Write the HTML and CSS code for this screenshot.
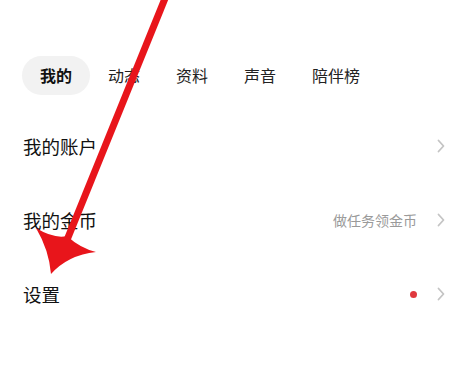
FILE: index.html
```html
<!DOCTYPE html>
<html lang="zh-CN">
  <head>
    <meta charset="UTF-8" />
    <title>我的</title>
    <link rel="stylesheet" href="styles.css">
  </head>
  <body>
    <div class="tabs">
      <span class="tab active">我的</span>
      <span class="tab">动态</span>
      <span class="tab">资料</span>
      <span class="tab">声音</span>
      <span class="tab">陪伴榜</span>
    </div>

    <div class="menu">
      <div class="row">
        <span class="row-title">我的账户</span>
        <span class="row-extra">
          <svg class="chevron" viewBox="0 0 8 14"><polyline points="1.5,1.5 6.5,7 1.5,12.5" /></svg>
        </span>
      </div>
      <div class="row">
        <span class="row-title">我的金币</span>
        <span class="row-extra">
          <span class="hint">做任务领金币</span>
          <svg class="chevron" viewBox="0 0 8 14"><polyline points="1.5,1.5 6.5,7 1.5,12.5" /></svg>
        </span>
      </div>
      <div class="row">
        <span class="row-title">设置</span>
        <span class="row-extra">
          <span class="dot"></span>
          <svg class="chevron" viewBox="0 0 8 14"><polyline points="1.5,1.5 6.5,7 1.5,12.5" /></svg>
        </span>
      </div>
    </div>

    <!-- 标注箭头 -->
    <svg class="arrow" viewBox="0 0 471 368">
      <line x1="166" y1="-4" x2="67" y2="240" />
      <path d="M51,274 Q49,250 36,228 Q54,239 67,236 Q80,248 96,252 Q68,255 51,274 Z" />
    </svg>
  </body>
</html>
```

FILE: styles.css
```css
body {
  margin: 0;
  width: 471px;
  height: 368px;
  overflow: hidden;
  background-color: #ffffff;
  font-family: "Noto Sans CJK SC", "Noto Sans", sans-serif;
  color: #1a1a1a;
  position: relative;
}
.tabs {
  display: flex;
  padding: 56px 0 0 22px;
}
.tab {
  height: 39px;
  line-height: 39px;
  padding: 0 18px;
  font-size: 16px;
  color: #222222;
  border-radius: 20px;
}
.tab.active {
  background-color: #f2f2f2;
  font-weight: 700;
  color: #111111;
}
.menu {
  margin-top: 14px;
}
.row {
  display: flex;
  align-items: center;
  justify-content: space-between;
  height: 74px;
  padding: 0 26px 0 23px;
}
.row-title {
  font-size: 18.5px;
  color: #111111;
}
.row-extra {
  display: flex;
  align-items: center;
  gap: 16px;
}
.hint {
  font-size: 14px;
  color: #9a9a9a;
  margin-right: 4px;
}
.dot {
  width: 7px;
  height: 7px;
  border-radius: 50%;
  background-color: #e0393e;
  margin-right: 4px;
}
.chevron {
  width: 8px;
  height: 14px;
  fill: none;
  stroke: #c4c4c4;
  stroke-width: 1.8;
  stroke-linecap: round;
  stroke-linejoin: round;
}
.arrow {
  position: absolute;
  left: 0;
  top: 0;
  width: 471px;
  height: 368px;
  pointer-events: none;
}
.arrow line {
  stroke: #e8151b;
  stroke-width: 7;
}
.arrow path {
  fill: #e8151b;
}
```
